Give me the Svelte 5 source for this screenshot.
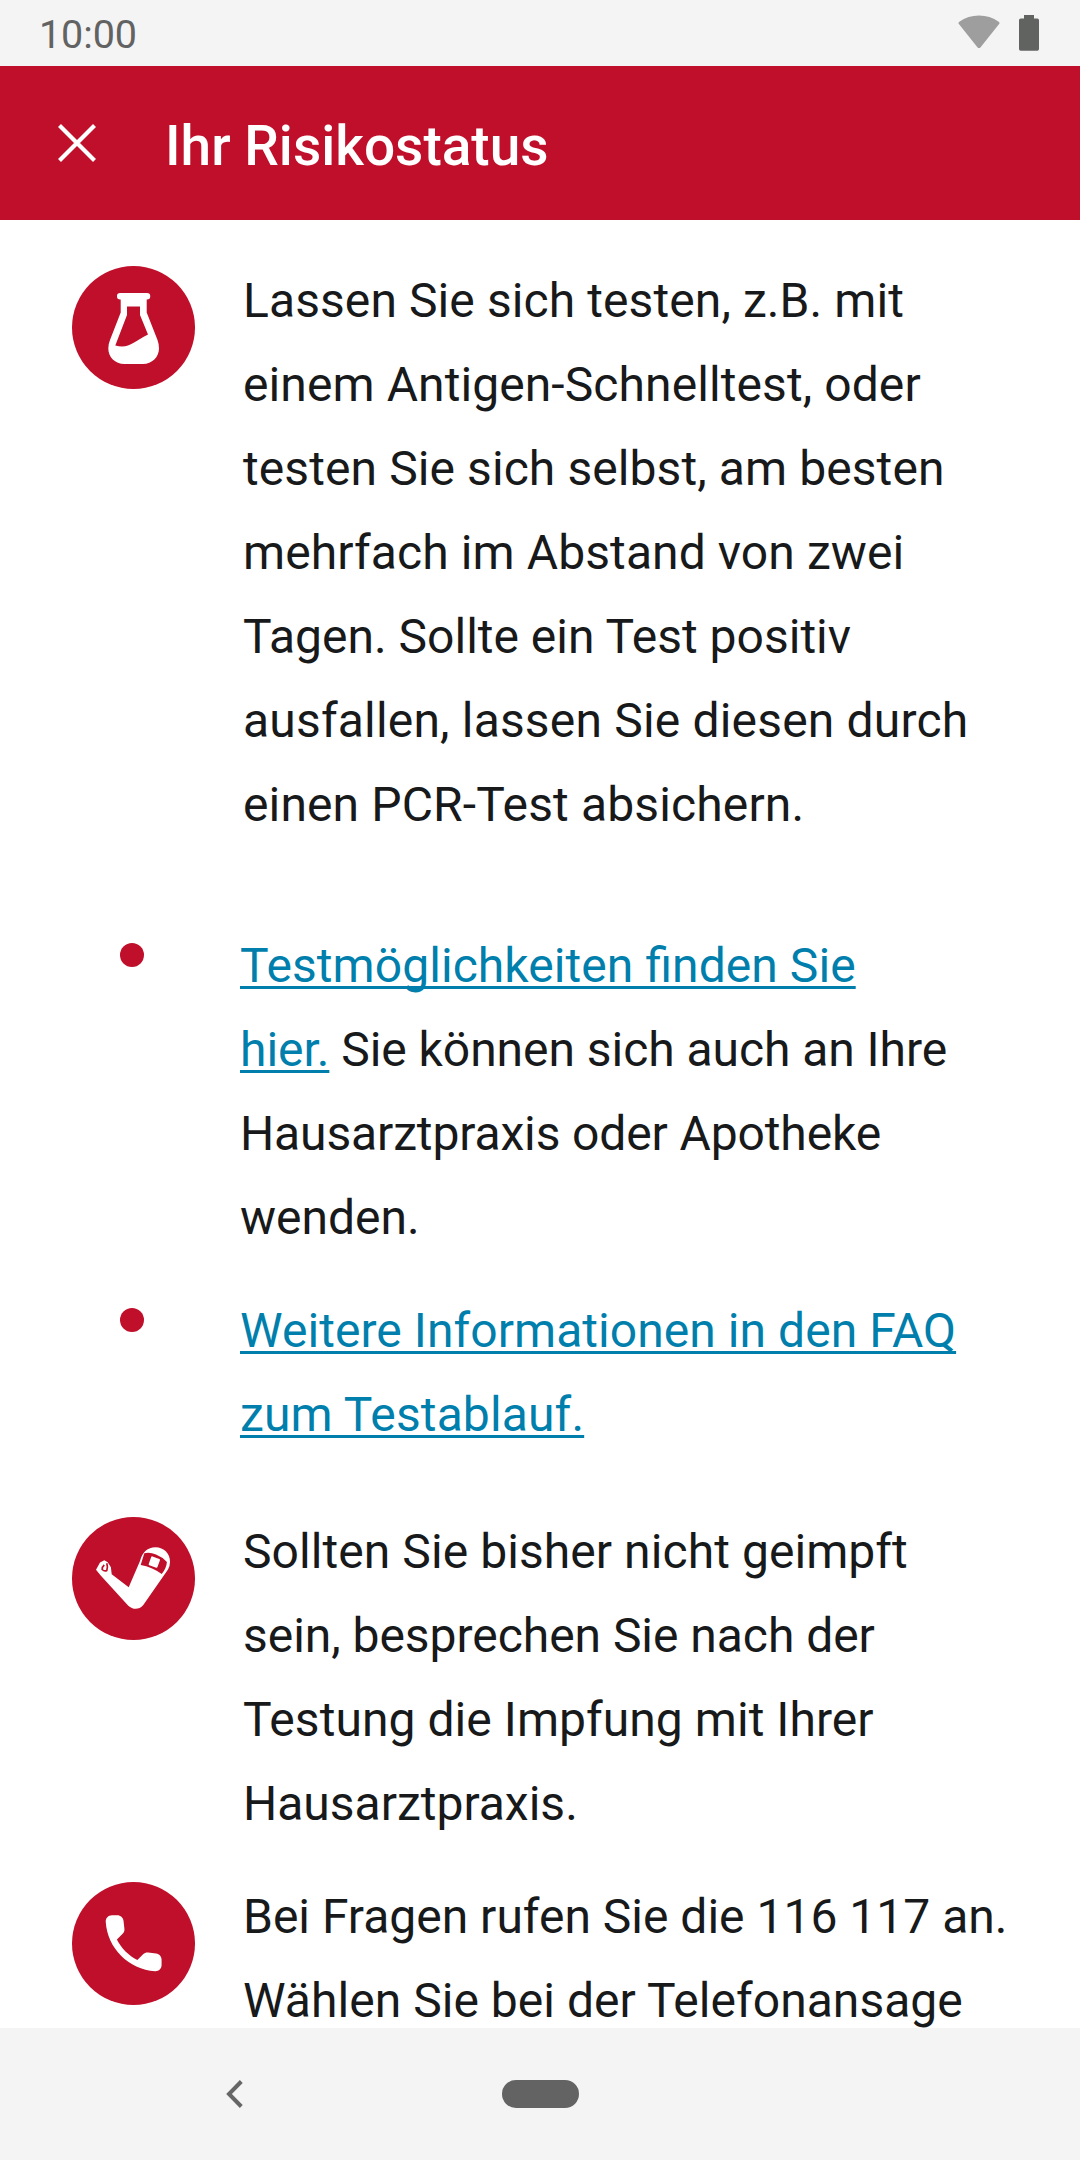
<script>
  // Each line carries its own tracking in hundredths of a pixel.
  const flask = [
    ['Lassen Sie sich testen, z.B. mit', 9],
    ['einem Antigen-Schnelltest, oder', 9],
    ['testen Sie sich selbst, am besten', 9],
    ['mehrfach im Abstand von zwei', 10],
    ['Tagen. Sollte ein Test positiv', 0],
    ['ausfallen, lassen Sie diesen durch', 18],
    ['einen PCR-Test absichern.', 13]
  ];
  const arm = [
    ['Sollten Sie bisher nicht geimpft', 7],
    ['sein, besprechen Sie nach der', -4],
    ['Testung die Impfung mit Ihrer', 5],
    ['Hausarztpraxis.', 0]
  ];
  const phone = [
    ['Bei Fragen rufen Sie die 116 117 an.', 0],
    ['Wählen Sie bei der Telefonansage', 4]
  ];
  const bullets = [
    [
      { link: 'Testmöglichkeiten finden Sie', track: 7 },
      { link: 'hier.', rest: ' Sie können sich auch an Ihre', track: -5 },
      { rest: 'Hausarztpraxis oder Apotheke', track: -13 },
      { rest: 'wenden.', track: 0 }
    ],
    [
      { link: 'Weitere Informationen in den FAQ', track: 6 },
      { link: 'zum Testablauf.', track: 13 }
    ]
  ];
</script>

{#snippet lines(list)}
  <p class="text">
    {#each list as [line, track]}<span class="line" style:letter-spacing="{track / 100}px">{line}</span>{/each}
  </p>
{/snippet}

<div class="screen">
  <header class="status">
    <span class="clock">10:00</span>
    <div class="indicators">
      <svg class="wifi" viewBox="0 0 42 34">
        <path d="M1.3 9.6Q-.4 8 1.3 6.7Q10 .4 21 .4T40.7 6.7Q42.4 8 40.7 9.6L22.6 32.2Q21 34 19.4 32.2Z" />
      </svg>
      <svg class="battery" viewBox="0 0 20 36">
        <path d="M5 0h10v3.5h3.3a1.7 1.7 0 0 1 1.7 1.7v28.9a1.7 1.7 0 0 1-1.7 1.7H1.7A1.7 1.7 0 0 1 0 34.1V5.2a1.7 1.7 0 0 1 1.7-1.7H5z" />
      </svg>
    </div>
  </header>

  <div class="appbar">
    <svg class="close" viewBox="0 0 38 38"><path d="M1.5 1.5l35 35M36.5 1.5l-35 35" /></svg>
    <h1>Ihr Risikostatus</h1>
  </div>

  <main>
    <section class="row first">
      <svg class="badge" viewBox="0 0 123 123">
        <circle cx="61.5" cy="61.5" r="61.5" />
        <path class="ink" fill-rule="evenodd" d="M48.2 27H75a3.2 3.2 0 0 1 0 6.5h-.3V46.5L85.5 74Q87 78 87 82.5C87 91 80 98 71 98H52.5C43 98 36.3 91 36.3 82.5Q36.3 78 38 74L48.7 46.5V33.5h-.5a3.2 3.2 0 0 1 0-6.5ZM55 40.5V49L43.3 79.5C57 83 61 76 76 68.5L68 49V40.5Z" />
      </svg>
      {@render lines(flask)}
    </section>

    <ul>
      {#each bullets as item, i}
        <li>
          <i class="dot"></i>
          <p class="text">
            {#each item as line}
              <span class="line" style:letter-spacing="{line.track / 100}px">{#if line.link}<a href="#link-{i}">{line.link}</a>{/if}{line.rest ?? ''}</span>
            {/each}
          </p>
        </li>
      {/each}
    </ul>

    <section class="row">
      <svg class="badge" viewBox="0 0 123 123">
        <circle cx="61.5" cy="61.5" r="61.5" />
        <path class="ink" d="M24 52.7L28 45.5 32.3 43.3 35.7 45.3 38.9 50.3 39.7 57.3 56.7 70.3 68 44C70.5 35 75.5 30.3 83.5 30.3C92 30.3 98.3 37 98 45Q98 49 96 52.5L71.3 88C67 93 61 93 56.3 88.7L28.7 58.5Z" />
        <path d="M72.3 36.3Q78 35 84 37.6Q90 40 94.9 44.9Q94.5 51 89.7 57Q80 50 68.7 48Z" />
        <rect class="ink" x="77.7" y="40.4" width="9.3" height="9.3" rx="1" transform="rotate(20 82.3 45)" />
        <path class="crease" d="M32.3 48Q29.8 50 30.2 52.5Q32.5 54.8 34.8 53.5Q36 50 34.8 46.3" />
      </svg>
      {@render lines(arm)}
    </section>

    <section class="row">
      <svg class="badge" viewBox="0 0 123 123">
        <circle cx="61.5" cy="61.5" r="61.5" />
        <path class="ink" transform="translate(24.3 24) scale(3.11)" d="M19.23 15.26l-2.54-.29c-.61-.07-1.21.14-1.64.57l-1.84 1.84c-2.83-1.44-5.15-3.75-6.59-6.59l1.85-1.85c.43-.43.64-1.03.57-1.64l-.29-2.52c-.12-1.01-.97-1.77-1.99-1.77H5.03c-1.13 0-2.07.94-2 2.07.53 8.54 7.36 15.36 15.89 15.89 1.13.07 2.07-.87 2.07-2v-1.73c.01-1.01-.75-1.86-1.76-1.98z" />
      </svg>
      {@render lines(phone)}
    </section>
  </main>

  <footer>
    <svg class="back" viewBox="0 0 17 28"><path d="M15.3 1.5L3 14l12.3 12.5" /></svg>
    <span class="home"></span>
  </footer>
</div>

<style>
  :global(body) {
    margin: 0;
  }
  .screen {
    display: flex;
    flex-direction: column;
    width: 1080px;
    height: 2160px;
    overflow: hidden;
    background: #fff;
    font-family: Roboto, sans-serif;
    color: #17191a;
  }
  .status {
    display: flex;
    justify-content: space-between;
    flex: none;
    height: 66px;
    box-sizing: border-box;
    padding: 0 41px 0 39px;
    background: #f4f4f4;
  }
  .clock {
    font-size: 39.5px;
    letter-spacing: -0.1px;
    line-height: 69px;
    color: #626262;
  }
  .indicators {
    display: flex;
    gap: 19px;
    padding-top: 15px;
  }
  .wifi {
    width: 42px;
    height: 34px;
    fill: #9e9e9e;
  }
  .battery {
    width: 20px;
    height: 36px;
    fill: #616361;
  }
  .appbar {
    display: flex;
    align-items: center;
    flex: none;
    height: 154px;
    box-sizing: border-box;
    padding-left: 58px;
    background: #bf0f2a;
    color: #fff;
  }
  .close {
    width: 38px;
    height: 38px;
    fill: none;
    stroke: #fff;
    stroke-width: 4.2;
  }
  h1 {
    margin: 5px 0 0 69px;
    font-size: 55px;
    font-weight: 500;
    line-height: 80px;
  }
  main {
    flex: 1;
    min-height: 0;
    overflow: hidden;
  }
  .row {
    display: flex;
    align-items: flex-start;
    gap: 48px;
    padding: 29px 0 0 72px;
  }
  .row.first {
    padding-top: 39px;
  }
  .badge {
    flex: none;
    width: 123px;
    height: 123px;
    margin-top: 7px;
    fill: #bf0f2a;
  }
  .ink {
    fill: #fff;
  }
  .crease {
    fill: none;
    stroke: #bf0f2a;
    stroke-width: 1.7;
  }
  .text {
    margin: 0;
    font-size: 48px;
    line-height: 84px;
    font-feature-settings: 'liga' 1;
  }
  .line {
    display: block;
    white-space: pre;
  }
  ul {
    margin: 0;
    padding: 77px 0 24px 120px;
    list-style: none;
  }
  li {
    display: flex;
    gap: 96px;
  }
  li + li {
    margin-top: 29px;
  }
  .dot {
    flex: none;
    width: 24px;
    height: 24px;
    margin-top: 19px;
    border-radius: 50%;
    background: #bf0f2a;
  }
  a {
    color: #007fad;
    text-decoration: underline;
    text-decoration-thickness: 3px;
    text-underline-offset: 4px;
    text-decoration-skip-ink: none;
  }
  footer {
    display: flex;
    flex: none;
    align-items: center;
    height: 132px;
    box-sizing: border-box;
    padding-left: 226px;
    background: #f4f4f4;
  }
  .back {
    width: 17px;
    height: 28px;
    fill: none;
    stroke: #666;
    stroke-width: 4;
  }
  .home {
    width: 77px;
    height: 28px;
    margin-left: 259px;
    border-radius: 14px;
    background: #636363;
  }
</style>
